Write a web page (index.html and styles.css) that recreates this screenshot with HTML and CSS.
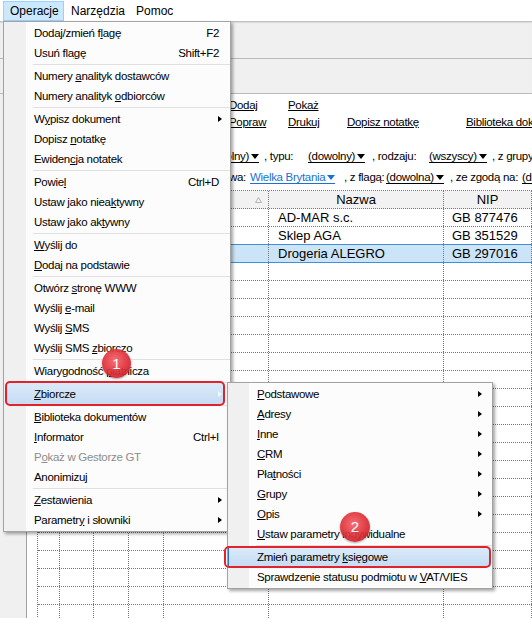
FILE: index.html
```html
<!DOCTYPE html>
<html lang="pl">
<head>
<meta charset="utf-8">
<title>Kontrahenci</title>
<link rel="stylesheet" href="styles.css">
</head>
<body>
<div class="menubar">
  <div class="mb-item mb-op active">Operacje</div>
  <div class="mb-item mb-na">Narzędzia</div>
  <div class="mb-item mb-po">Pomoc</div>
</div>
<div class="toolbar">
  <div class="tb-row tb-row1"></div>
  <div class="tb-row tb-row2"></div>
</div>
<div class="main">
  <div class="side"></div>
  <div class="content">
    <div class="links">
      <span></span><a>Dodaj</a><a>Pokaż</a><span></span><span></span>
      <span></span><a>Popraw</a><a>Drukuj</a><a>Dopisz notatkę</a><a>Biblioteka dokumentów</a>
    </div>
    <div class="filters">
      <div class="frow">
        <span class="lead lead1">Pokaż kontrahentów: <u class="val">(dowolny)<i class="tri"></i></u></span>
        <span class="w44">, typu:</span>
        <span class="w64"><u class="val">(dowolny)<i class="tri"></i></u></span>
        <span class="w57">, rodzaju:</span>
        <span class="w63"><u class="val">(wszyscy)<i class="tri"></i></u></span>
        <span>, z grupy: <u class="val">(dowolna)<i class="tri"></i></u></span>
      </div>
      <div class="frow">
        <span class="lead lead2">z województwa i państwa:</span>
        <span class="w94"><u class="val blue">Wielka Brytania<i class="tri"></i></u></span>
        <span class="w42">, z flagą:</span>
        <span class="w64"><u class="val">(dowolna)<i class="tri"></i></u></span>
        <span class="w72">, ze zgodą na:</span>
        <span><u class="val">(dowolna)<i class="tri"></i></u></span>
      </div>
    </div>
    <div class="grid">
      <div class="row head">
        <div class="c c0"></div><div class="c c1"></div><div class="c c2"></div><div class="c c3"></div>
        <div class="c c4 sortc"><svg class="sort" width="7" height="6" viewBox="0 0 7 6"><polygon points="3.5,0.5 6.5,5.5 0.5,5.5" fill="none" stroke="#b4b4b4" stroke-width="1"/></svg></div>
        <div class="c c5">Nazwa</div><div class="c c6">NIP</div>
      </div>
      <div class="row">
        <div class="c c0"></div><div class="c c1"></div><div class="c c2"></div><div class="c c3"></div><div class="c c4"></div>
        <div class="c c5">AD-MAR s.c.</div><div class="c c6">GB 877476</div>
      </div>
      <div class="row">
        <div class="c c0"></div><div class="c c1"></div><div class="c c2"></div><div class="c c3"></div><div class="c c4"></div>
        <div class="c c5">Sklep AGA</div><div class="c c6">GB 351529</div>
      </div>
      <div class="row sel">
        <div class="c c0"></div><div class="c c1"></div><div class="c c2"></div><div class="c c3"></div><div class="c c4"></div>
        <div class="c c5">Drogeria ALEGRO</div><div class="c c6">GB 297016</div>
      </div>
      <div class="row"><div class="c c0"></div><div class="c c1"></div><div class="c c2"></div><div class="c c3"></div><div class="c c4"></div><div class="c c5"></div><div class="c c6"></div></div>
      <div class="row"><div class="c c0"></div><div class="c c1"></div><div class="c c2"></div><div class="c c3"></div><div class="c c4"></div><div class="c c5"></div><div class="c c6"></div></div>
      <div class="row"><div class="c c0"></div><div class="c c1"></div><div class="c c2"></div><div class="c c3"></div><div class="c c4"></div><div class="c c5"></div><div class="c c6"></div></div>
      <div class="row"><div class="c c0"></div><div class="c c1"></div><div class="c c2"></div><div class="c c3"></div><div class="c c4"></div><div class="c c5"></div><div class="c c6"></div></div>
      <div class="row"><div class="c c0"></div><div class="c c1"></div><div class="c c2"></div><div class="c c3"></div><div class="c c4"></div><div class="c c5"></div><div class="c c6"></div></div>
      <div class="row"><div class="c c0"></div><div class="c c1"></div><div class="c c2"></div><div class="c c3"></div><div class="c c4"></div><div class="c c5"></div><div class="c c6"></div></div>
      <div class="row"><div class="c c0"></div><div class="c c1"></div><div class="c c2"></div><div class="c c3"></div><div class="c c4"></div><div class="c c5"></div><div class="c c6"></div></div>
      <div class="row"><div class="c c0"></div><div class="c c1"></div><div class="c c2"></div><div class="c c3"></div><div class="c c4"></div><div class="c c5"></div><div class="c c6"></div></div>
      <div class="row"><div class="c c0"></div><div class="c c1"></div><div class="c c2"></div><div class="c c3"></div><div class="c c4"></div><div class="c c5"></div><div class="c c6"></div></div>
      <div class="row"><div class="c c0"></div><div class="c c1"></div><div class="c c2"></div><div class="c c3"></div><div class="c c4"></div><div class="c c5"></div><div class="c c6"></div></div>
      <div class="row"><div class="c c0"></div><div class="c c1"></div><div class="c c2"></div><div class="c c3"></div><div class="c c4"></div><div class="c c5"></div><div class="c c6"></div></div>
      <div class="row"><div class="c c0"></div><div class="c c1"></div><div class="c c2"></div><div class="c c3"></div><div class="c c4"></div><div class="c c5"></div><div class="c c6"></div></div>
      <div class="row"><div class="c c0"></div><div class="c c1"></div><div class="c c2"></div><div class="c c3"></div><div class="c c4"></div><div class="c c5"></div><div class="c c6"></div></div>
      <div class="row"><div class="c c0"></div><div class="c c1"></div><div class="c c2"></div><div class="c c3"></div><div class="c c4"></div><div class="c c5"></div><div class="c c6"></div></div>
      <div class="row"><div class="c c0"></div><div class="c c1"></div><div class="c c2"></div><div class="c c3"></div><div class="c c4"></div><div class="c c5"></div><div class="c c6"></div></div>
      <div class="row"><div class="c c0"></div><div class="c c1"></div><div class="c c2"></div><div class="c c3"></div><div class="c c4"></div><div class="c c5"></div><div class="c c6"></div></div>
      <div class="row"><div class="c c0"></div><div class="c c1"></div><div class="c c2"></div><div class="c c3"></div><div class="c c4"></div><div class="c c5"></div><div class="c c6"></div></div>
      <div class="row"><div class="c c0"></div><div class="c c1"></div><div class="c c2"></div><div class="c c3"></div><div class="c c4"></div><div class="c c5"></div><div class="c c6"></div></div>
      <div class="row"><div class="c c0"></div><div class="c c1"></div><div class="c c2"></div><div class="c c3"></div><div class="c c4"></div><div class="c c5"></div><div class="c c6"></div></div>
      <div class="row"><div class="c c0"></div><div class="c c1"></div><div class="c c2"></div><div class="c c3"></div><div class="c c4"></div><div class="c c5"></div><div class="c c6"></div></div>
    </div>
  </div>
</div>

<div class="menu mainmenu">
  <div class="mi"><span class="lb">Dodaj/zmień f<u>l</u>agę</span><span class="sc">F2</span></div>
  <div class="mi"><span class="lb">Usuń fla<u>g</u>ę</span><span class="sc">Shift+F2</span></div>
  <div class="sep"></div>
  <div class="mi"><span class="lb">Numery <u>a</u>nalityk dostawców</span></div>
  <div class="mi"><span class="lb">Numery analityk <u>o</u>dbiorców</span></div>
  <div class="sep"></div>
  <div class="mi"><span class="lb">W<u>y</u>pisz dokument</span><span class="arr"></span></div>
  <div class="mi"><span class="lb">Dopisz <u>n</u>otatkę</span></div>
  <div class="mi"><span class="lb">Ewiden<u>c</u>ja notatek</span></div>
  <div class="sep"></div>
  <div class="mi"><span class="lb">Powie<u>l</u></span><span class="sc">Ctrl+D</span></div>
  <div class="mi"><span class="lb">Ustaw jako niea<u>k</u>tywny</span></div>
  <div class="mi"><span class="lb">Ustaw jako ak<u>t</u>ywny</span></div>
  <div class="sep"></div>
  <div class="mi"><span class="lb"><u>W</u>yślij do</span></div>
  <div class="mi"><span class="lb"><u>D</u>odaj na podstawie</span></div>
  <div class="sep"></div>
  <div class="mi"><span class="lb">Otwórz <u>s</u>tronę WWW</span></div>
  <div class="mi"><span class="lb">Wyślij <u>e</u>-mail</span></div>
  <div class="mi"><span class="lb">Wyślij <u>S</u>MS</span></div>
  <div class="mi"><span class="lb">Wyślij SMS <u>z</u>biorczo</span></div>
  <div class="sep"></div>
  <div class="mi"><span class="lb">Wiarygodność <u>p</u>łatnicza</span></div>
  <div class="sep"></div>
  <div class="mi hl"><span class="lb"><u>Z</u>biorcze</span><span class="arr arr-w"></span></div>
  <div class="sep"></div>
  <div class="mi"><span class="lb"><u>B</u>iblioteka dokumentów</span></div>
  <div class="mi"><span class="lb"><u>I</u>nformator</span><span class="sc">Ctrl+I</span></div>
  <div class="mi dis"><span class="lb">P<u>o</u>każ w Gestorze GT</span></div>
  <div class="mi"><span class="lb">Anonimizuj</span></div>
  <div class="sep"></div>
  <div class="mi"><span class="lb"><u>Z</u>estawienia</span><span class="arr"></span></div>
  <div class="mi"><span class="lb">Parametr<u>y</u> i słowniki</span><span class="arr"></span></div>
</div>

<div class="menu submenu">
  <div class="mi"><span class="lb"><u>P</u>odstawowe</span><span class="arr"></span></div>
  <div class="mi"><span class="lb"><u>A</u>dresy</span><span class="arr"></span></div>
  <div class="mi"><span class="lb"><u>I</u>nne</span><span class="arr"></span></div>
  <div class="mi"><span class="lb"><u>C</u>RM</span><span class="arr"></span></div>
  <div class="mi"><span class="lb">Pła<u>t</u>ności</span><span class="arr"></span></div>
  <div class="mi"><span class="lb"><u>G</u>rupy</span><span class="arr"></span></div>
  <div class="mi"><span class="lb"><u>O</u>pis</span><span class="arr"></span></div>
  <div class="mi"><span class="lb"><u>U</u>staw parametry indywidualne</span></div>
  <div class="sep"></div>
  <div class="mi hl"><span class="lb">Zmień parametry <u>k</u>sięgowe</span></div>
  <div class="mi"><span class="lb">Sprawdzenie statusu podmiotu w <u>V</u>AT/VIES</span></div>
</div>

<div class="badge b1">1</div>
<div class="badge b2">2</div>
</body>
</html>
```

FILE: styles.css
```css
* { box-sizing: border-box; }
html, body { margin: 0; padding: 0; width: 532px; height: 618px; overflow: hidden; }
body {
  position: relative;
  font-family: "Liberation Sans", Arial, sans-serif;
  font-size: 11.5px;
  letter-spacing: -0.3px;
  color: #000;
  background: #f0f0f0;
}

/* menu bar */
.menubar { height: 21px; background: #fff; display: flex; padding-left: 3px; font-size: 12px; letter-spacing: 0; }
.mb-item { height: 20px; margin-top: 1px; border: 1px solid transparent; line-height: 18px; padding-left: 6px; white-space: nowrap; }
.mb-op { width: 61px; }
.mb-na { width: 65px; }
.mb-po { width: 50px; }
.mb-item.active { background: #cce8ff; border-color: #99d1ff; }

/* toolbar */
.toolbar { border-top: 1px solid #c2c2c2; background: #f0f0f0; box-shadow: inset 0 1px 1px #dadada; }
.tb-row1 { height: 37px; border-bottom: 1px solid #bababa; }
.tb-row2 { height: 35px; border-bottom: 1px solid #bababa; }

/* main area */
.main { display: flex; height: 524px; }
.side { width: 27px; flex: none; background: #f0f0f0; border-right: 1px solid #a0a0a0; }
.content { flex: 1; min-width: 0; background: #fff; padding-top: 3px; overflow: hidden; }

.links { display: grid; grid-template-columns: 202px 59px 59px 119px 1fr; grid-auto-rows: 17px; line-height: 17px; white-space: nowrap; }
.links a { color: #000; text-decoration: underline; overflow: hidden; }

.filters { margin-top: 15px; }
.frow { display: flex; height: 21px; line-height: 21px; white-space: nowrap; overflow: hidden; }
.frow > span { flex: none; }
.lead { text-align: right; overflow: hidden; }
.lead1 { width: 237px; padding-right: 5px; }
.lead2 { width: 223px; padding-right: 4px; }
.w42 { width: 42px; }
.w44 { width: 44px; }
.w57 { width: 57px; }
.w63 { width: 63px; }
.w64 { width: 64px; }
.w72 { width: 72px; }
.w94 { width: 94px; }
.val { text-decoration: none; border-bottom: 1px solid currentColor; }
.blue { color: #1a6fd8; }
.tri {
  display: inline-block; width: 0; height: 0;
  border-left: 4px solid transparent; border-right: 4px solid transparent;
  border-top: 5px solid currentColor;
  margin-left: 2px; vertical-align: 1px;
}

/* grid */
.grid {
  margin: 2px 0 0 10px; width: 495px;
  border-left: 1px dotted #777; border-top: 1px dotted #777;
  font-size: 13px; letter-spacing: 0;
}
.row { display: flex; height: 18px; border-bottom: 1px dotted #777; }
.c { flex: none; height: 17px; border-right: 1px dotted #777; line-height: 17px; white-space: nowrap; overflow: hidden; }
.c0 { width: 22px; }
.c1 { width: 34px; }
.c2 { width: 35px; }
.c3 { width: 35px; }
.c4 { width: 105px; }
.c5 { width: 175px; padding-left: 9px; }
.c6 { width: 88px; padding-left: 8px; }
.head { background: #f2f2f2; }
.head .c5, .head .c6 { text-align: center; padding-left: 0; }
.sortc { display: flex; align-items: center; justify-content: flex-end; padding-right: 6px; }
.sort { display: block; }
.sel { background: #cce4f7; border-bottom: 1px solid #3f8fdc; box-shadow: 0 -1px 0 #3f8fdc; }

/* popup menus */
.menu {
  position: absolute; border: 1px solid #a3a3a3; padding: 1px 0;
  box-shadow: 2px 2px 3px rgba(0, 0, 0, 0.35);
}
.mainmenu { left: 3px; top: 21px; width: 228px; z-index: 5; background: linear-gradient(to right, #f0f0f0 22px, #fcfcfc 22px); }
.submenu { left: 227px; top: 382px; width: 266px; z-index: 6; background: linear-gradient(to right, #f0f0f0 21px, #fcfcfc 21px); }
.mi { position: relative; display: flex; align-items: center; height: 20px; padding: 0 11px 0 30px; white-space: nowrap; }
.submenu .mi { padding: 0 10px 0 29px; }
.mi .lb { flex: 1; }
.mi.dis { color: #8d8d8d; }
.arr { width: 0; height: 0; border-style: solid; border-width: 3.5px 0 3.5px 4px; border-color: transparent transparent transparent #000; margin-right: -3px; }
.submenu .arr { margin-right: 0; }
.arr-w { border-left-color: #f6f6f6; }
.sep { height: 1px; margin: 1px 0 1px 29px; background: #e0e0e0; }
.submenu .sep { margin-left: 28px; }

.mi.hl > span { position: relative; z-index: 1; }
.mi.hl::before, .mi.hl::after { content: ""; position: absolute; border-radius: 5px; }
.mi.hl::before { background: linear-gradient(#dcebf9, #c4dbf3); }
.mi.hl::after { border: 2px solid #e2232c; z-index: 2; }
.mainmenu .hl::before, .mainmenu .hl::after { left: 1px; right: 5px; top: -3px; bottom: -2px; }
.submenu .hl { box-shadow: inset 1px 0 #2f6fc6; }
.submenu .hl::before { left: 1px; right: 1px; top: 0; bottom: 0; border-radius: 0; }
.submenu .hl::after { left: -4px; right: 1px; top: -1px; bottom: -1px; }

/* annotation badges */
.badge {
  position: absolute; z-index: 10; border-radius: 50%;
  color: #fff; font-size: 15px; text-align: center; letter-spacing: 0;
  background: radial-gradient(circle at 45% 40%, #f4656a 0%, #e2353d 45%, #cc1f28 78%, #b3161e 100%);
  box-shadow: 0 1px 2px rgba(0, 0, 0, 0.35);
  opacity: 0.92;
}
.b1 { left: 102px; top: 349px; width: 29px; height: 29px; line-height: 29px; }
.b2 { left: 340px; top: 512px; width: 30px; height: 30px; line-height: 30px; }
```
